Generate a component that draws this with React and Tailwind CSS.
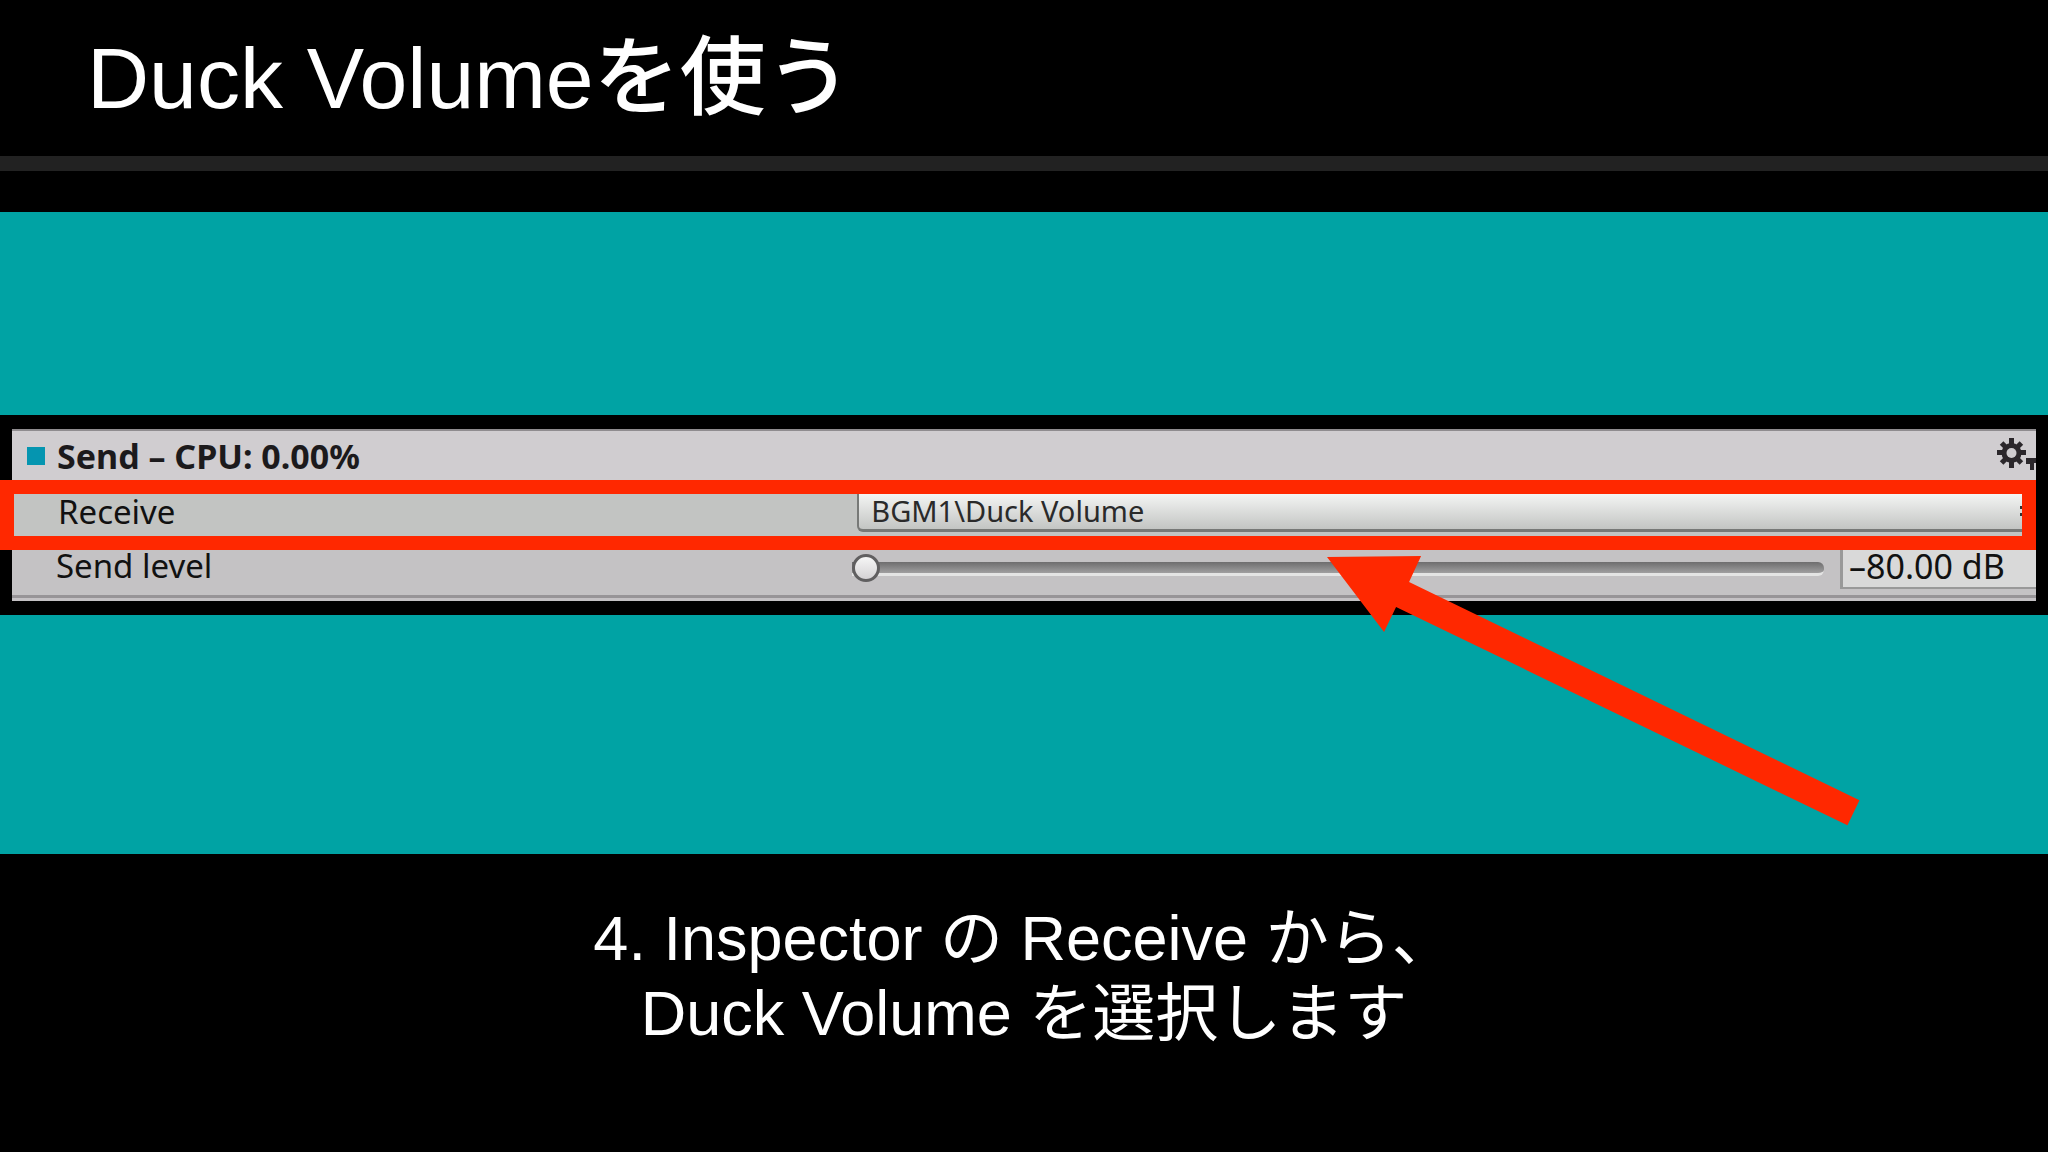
import { useState } from 'react';

const receivers = ['BGM1\\Duck Volume'];

function GearIcon() {
  return (
    <svg viewBox="0 0 39 33" className="h-[33px] w-[39px]" aria-hidden="true">
      <g fill="#2b272b">
        <rect x="12" y="0" width="5" height="30" />
        <rect x="0" y="12" width="29" height="5" />
        <rect x="12" y="1" width="5" height="28" transform="rotate(45 14.5 15)" />
        <rect x="12" y="1" width="5" height="28" transform="rotate(-45 14.5 15)" />
        <circle cx="14.5" cy="15" r="10" />
        <path d="M29 20h10v5h-2v7h-4v-6h-4z" />
      </g>
      <circle cx="14.5" cy="15" r="5" fill="#cfcccf" />
    </svg>
  );
}

function SendPanel() {
  const [receiver, setReceiver] = useState(receivers[0]);
  const [level, setLevel] = useState(-80);

  return (
    <section className="bg-black py-[14px] pr-3 font-['Noto_Sans','Open_Sans',sans-serif] text-[33px] leading-9 text-[#111]">
      {/* Header */}
      <div className="ml-3 flex h-[51px] items-center border-t-2 border-[#8f8c8f] bg-[#d0cdd0] pl-[15px]">
        <span className="mr-3 h-[18px] w-[18px] bg-[#0595b0]" />
        <h2 className="flex-1 text-[34px] leading-8 font-bold text-[#1c1a1c]">Send – CPU: 0.00%</h2>
        <button type="button" aria-label="Effect settings" className="pb-0.5">
          <GearIcon />
        </button>
      </div>

      {/* Receive, the highlighted row */}
      <div className="flex h-[70px] items-start border-[14px] border-[#ff2800] bg-[#c2c4c2]">
        <label htmlFor="receive" className="w-[42%] pl-11">
          Receive
        </label>
        <div className="relative flex-1">
          <select
            id="receive"
            value={receiver}
            onChange={(e) => setReceiver(e.target.value)}
            className="block h-[38px] w-full appearance-none rounded-bl-md border-b-3 border-l-2 border-[#777977] bg-linear-to-b from-[#f4f5f4] to-[#c3c5c3] pb-0.5 pl-3 text-[29px] leading-8 text-[#2a2a2a]"
          >
            {receivers.map((name) => (
              <option key={name}>{name}</option>
            ))}
          </select>
          {/* edge of the up/down arrows, cut off by the frame */}
          <svg
            viewBox="0 0 2 12"
            className="pointer-events-none absolute top-3 right-0 h-3 w-0.5"
            aria-hidden="true"
          >
            <path d="M0 0h2v3H0zM0 7h2v3H0z" fill="#333" />
          </svg>
        </div>
      </div>

      {/* Send level */}
      <div className="ml-3 border-b-3 border-[#c4c1c4] bg-[#c4c2c4]">
        <div className="flex h-12 items-start border-b-3 border-[#979497]">
          <label htmlFor="level" className="w-[41.5%] pl-11 leading-8">
            Send level
          </label>
          <input
            id="level"
            type="range"
            min="-80"
            max="0"
            value={level}
            onChange={(e) => setLevel(Number(e.target.value))}
            className="mt-1 h-[30px] min-w-0 flex-1 appearance-none bg-transparent [&::-webkit-slider-runnable-track]:h-[14px] [&::-webkit-slider-runnable-track]:rounded-r-md [&::-webkit-slider-runnable-track]:border-b-3 [&::-webkit-slider-runnable-track]:border-[#e4e4e4] [&::-webkit-slider-runnable-track]:bg-linear-to-b [&::-webkit-slider-runnable-track]:from-[#6e6d6e] [&::-webkit-slider-runnable-track]:to-[#a09fa0] [&::-webkit-slider-thumb]:-mt-2 [&::-webkit-slider-thumb]:size-7 [&::-webkit-slider-thumb]:appearance-none [&::-webkit-slider-thumb]:rounded-full [&::-webkit-slider-thumb]:border-3 [&::-webkit-slider-thumb]:border-[#605f60] [&::-webkit-slider-thumb]:bg-linear-to-b [&::-webkit-slider-thumb]:from-[#f6f6f6] [&::-webkit-slider-thumb]:to-[#d5d3d5]"
          />
          <input
            type="text"
            aria-label="Send level in decibels"
            readOnly
            value={`${level < 0 ? '–' : ''}${Math.abs(level).toFixed(2)} dB`}
            className="ml-4 h-[39px] w-[196px] border-b-2 border-l-3 border-[#999] bg-[#d9d9d9] pb-1.5 pl-1.5 text-[34px] leading-8"
          />
        </div>
      </div>
    </section>
  );
}

export default function App() {
  return (
    <main className="min-h-screen bg-black font-['Liberation_Sans','Noto_Sans_CJK_JP',sans-serif] text-white">
      <header className="flex h-[171px] items-center border-b-[15px] border-[#222] pl-[87px]">
        <h1 className="text-[86px] leading-none font-medium">Duck Volumeを使う</h1>
      </header>

      <div className="relative mt-[41px] bg-[#00a3a4] pt-[203px] pb-[239px]">
        <SendPanel />
        <svg
          viewBox="0 0 532 276"
          className="absolute top-[344px] left-[64.8%] w-[26%]"
          aria-hidden="true"
        >
          <path
            d="M0 1 94 0 82 26 532 244 520 269 69 51 57 76z"
            fill="#ff2800"
          />
        </svg>
      </div>

      <p className="pt-[47px] text-center text-[63px] leading-[75px]">
        4. Inspector の Receive から、
        <br />
        Duck Volume を選択します
      </p>
    </main>
  );
}
